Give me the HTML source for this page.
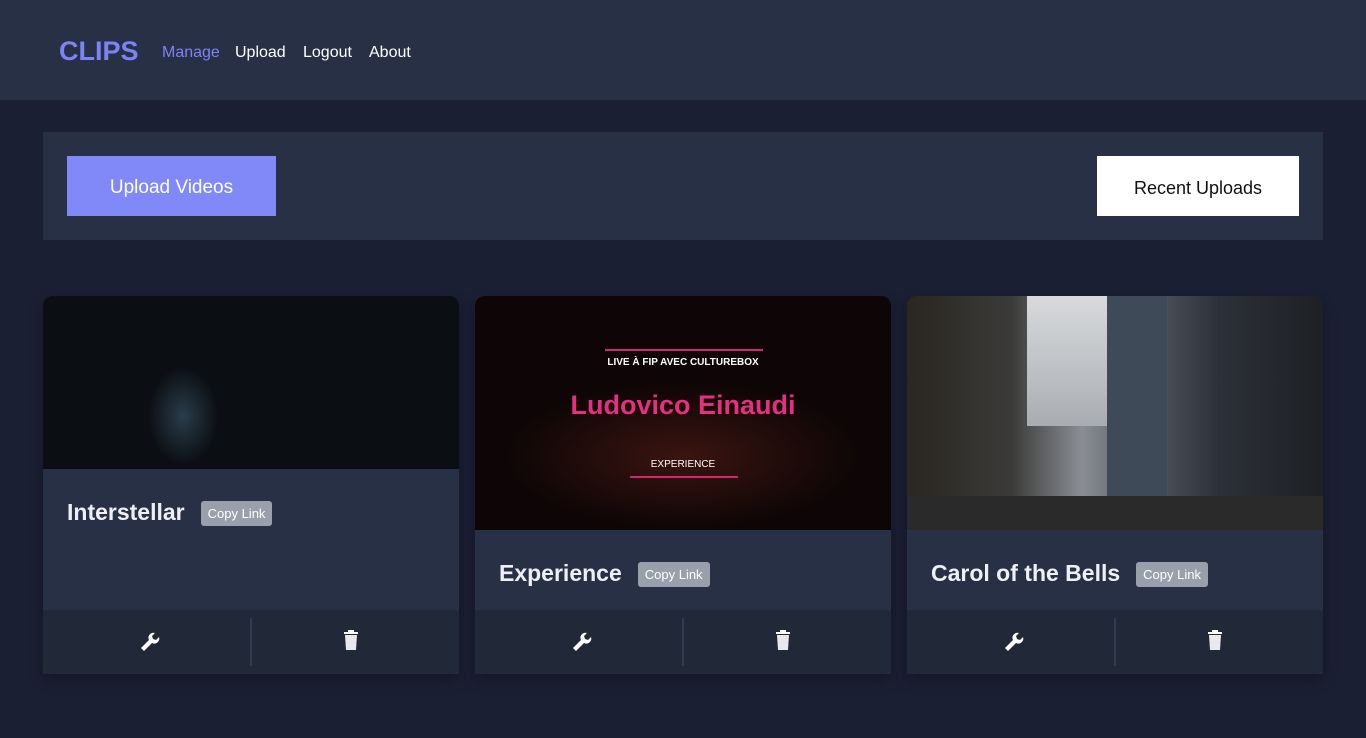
<!DOCTYPE html>
<html><head><meta charset="utf-8"><style>
*{margin:0;padding:0;box-sizing:border-box}
body{width:1366px;height:738px;background:#1b1f33;font-family:"Liberation Sans",sans-serif;overflow:hidden;position:relative}
.hdr{position:absolute;left:0;top:0;width:1366px;height:100px;background:#283046}
.logo{position:absolute;left:59px;top:36px;color:#7d82f5;font-weight:bold;font-size:27px}
.nav{position:absolute;top:44px;font-size:16px;color:#fff}
.bar{position:absolute;left:43px;top:132px;width:1280px;height:108px;background:#283046}
.b1{position:absolute;left:67px;top:156px;width:209px;height:60px;background:#8189f8;color:#fff;font-size:19px;text-align:center;line-height:64px}
.b2{position:absolute;left:1097px;top:156px;width:202px;height:60px;background:#fff;color:#111;font-size:18px;text-align:center;line-height:64px}
.card{position:absolute;top:296px;width:416px;height:378px;background:#283046;border-radius:10px 10px 0 0;overflow:hidden;box-shadow:0 6px 14px rgba(0,0,0,.3)}
.img{position:absolute;left:0;top:0;width:416px}
.t{position:absolute;left:24px;color:#eef0f6;font-weight:bold;font-size:23px;white-space:nowrap}
.cl{display:inline-block;vertical-align:middle;margin-left:16px;background:#9aa0ab;color:#fff;font-size:13px;font-weight:normal;padding:5px 7px;border-radius:3px}
.ft{position:absolute;left:0;top:314px;width:416px;height:64px;background:#212838}
.dv{position:absolute;left:207px;top:8px;width:2px;height:48px;background:#343b4e}
.ic{position:absolute;top:20px}
</style></head><body>
<div class="hdr"></div>
<div class="logo">CLIPS</div>
<div class="nav" style="left:162px;color:#7d82f5">Manage</div>
<div class="nav" style="left:235px">Upload</div>
<div class="nav" style="left:303px">Logout</div>
<div class="nav" style="left:369px">About</div>
<div class="bar"></div>
<div class="b1">Upload Videos</div>
<div class="b2">Recent Uploads</div>

<div class="card" style="left:43px">
<div class="img" style="height:173px;background:radial-gradient(ellipse 50px 70px at 140px 120px,#2a3c4a,#0b0f13 70%),#050607"></div>
<div class="t" style="top:203px">Interstellar<span class="cl">Copy Link</span></div>
<div class="ft"><div class="dv"></div>
<svg class="ic" style="left:95px" width="24" height="24" viewBox="0 0 24 24"><path d="M3 18l8-8a5 5 0 0 1 6-7l-3 3 1 3 3 1 3-3a5 5 0 0 1-7 6l-8 8z" fill="#fff"/></svg>
<svg class="ic" style="left:300px" width="16" height="22" viewBox="0 0 16 22"><rect x="1" y="2" width="14" height="2" fill="#fff"/><rect x="5" y="0" width="6" height="2" fill="#fff"/><path d="M2 5h12l-1 15H3z" fill="#e8e9ef"/></svg></div>
</div>

<div class="card" style="left:475px">
<div class="img" style="height:234px;background:radial-gradient(ellipse 220px 90px at 208px 160px,#3a1410,#0e0606 80%),#0a0404">
<div style="position:absolute;left:130px;top:53px;width:158px;height:2px;background:#d6256f"></div>
<div style="position:absolute;left:0;width:416px;top:61px;text-align:center;color:#fff;font-size:10px;font-weight:bold">LIVE À FIP AVEC CULTUREBOX</div>
<div style="position:absolute;left:0;width:416px;top:94px;text-align:center;color:#e4307f;font-size:27px;font-weight:bold">Ludovico Einaudi</div>
<div style="position:absolute;left:0;width:416px;top:163px;text-align:center;color:#fff;font-size:10px">EXPERIENCE</div>
<div style="position:absolute;left:155px;top:180px;width:108px;height:2px;background:#d6256f"></div>
</div>
<div class="t" style="top:264px">Experience<span class="cl">Copy Link</span></div>
<div class="ft"><div class="dv"></div>
<svg class="ic" style="left:95px" width="24" height="24" viewBox="0 0 24 24"><path d="M3 18l8-8a5 5 0 0 1 6-7l-3 3 1 3 3 1 3-3a5 5 0 0 1-7 6l-8 8z" fill="#fff"/></svg>
<svg class="ic" style="left:300px" width="16" height="22" viewBox="0 0 16 22"><rect x="1" y="2" width="14" height="2" fill="#fff"/><rect x="5" y="0" width="6" height="2" fill="#fff"/><path d="M2 5h12l-1 15H3z" fill="#e8e9ef"/></svg></div>
</div>

<div class="card" style="left:907px">
<div class="img" style="height:234px;background:linear-gradient(90deg,#2a2620 0,#3a3a38 25%,#8a8e94 42%,#5a6068 55%,#2c3038 75%,#1e2024 100%)">
<div style="position:absolute;left:120px;top:0;width:90px;height:130px;background:linear-gradient(#d8dadc,#a9adb2)"></div>
<div style="position:absolute;left:200px;top:0;width:60px;height:200px;background:#3e4a58"></div>
<div style="position:absolute;left:0;top:200px;width:416px;height:34px;background:#2a2a2a"></div>
</div>
<div class="t" style="top:264px">Carol of the Bells<span class="cl">Copy Link</span></div>
<div class="ft"><div class="dv"></div>
<svg class="ic" style="left:95px" width="24" height="24" viewBox="0 0 24 24"><path d="M3 18l8-8a5 5 0 0 1 6-7l-3 3 1 3 3 1 3-3a5 5 0 0 1-7 6l-8 8z" fill="#fff"/></svg>
<svg class="ic" style="left:300px" width="16" height="22" viewBox="0 0 16 22"><rect x="1" y="2" width="14" height="2" fill="#fff"/><rect x="5" y="0" width="6" height="2" fill="#fff"/><path d="M2 5h12l-1 15H3z" fill="#e8e9ef"/></svg></div>
</div>
</body></html>
